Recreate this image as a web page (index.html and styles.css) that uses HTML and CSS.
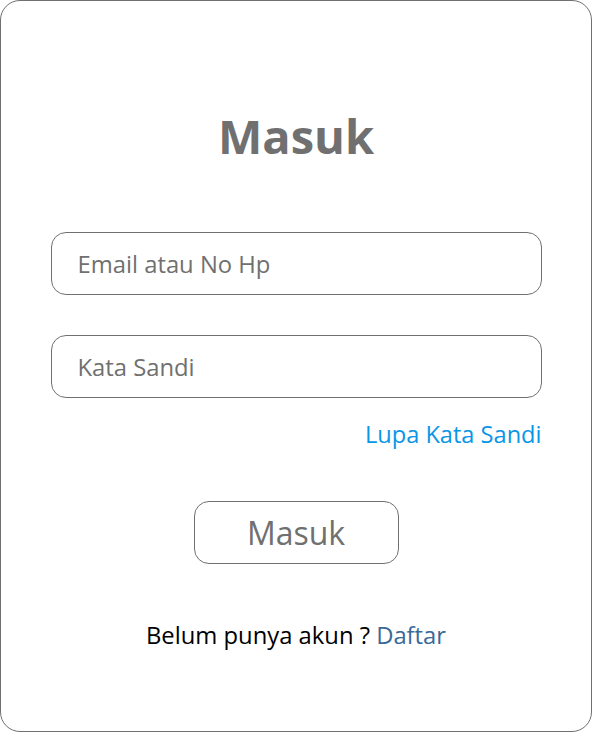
FILE: index.html
```html
<!DOCTYPE html>
<html lang="id">
<head>
<meta charset="utf-8">
<link rel="stylesheet" href="styles.css">
</head>
<body>
<div class="card">
  <h1 class="title">Masuk</h1>
  <form class="form">
    <input class="field" type="text" placeholder="Email atau No Hp">
    <input class="field field-second" type="password" placeholder="Kata Sandi">
    <a class="forgot" href="#">Lupa Kata Sandi</a>
    <button class="submit" type="button">Masuk</button>
  </form>
  <p class="signup">Belum punya akun ? <a class="signup-link" href="#">Daftar</a></p>
</div>
</body>
</html>
```
FILE: styles.css
```css
* { box-sizing: border-box; }
html, body { margin: 0; padding: 0; background: #fff; }
body {
  width: 592px;
  height: 732px;
  font-family: "Open Sans", "Noto Sans", sans-serif;
}
.card {
  width: 592px;
  height: 732px;
  border: 1px solid #707070;
  border-radius: 20px;
  display: flex;
  flex-direction: column;
  align-items: center;
  padding: 103px 50px 0 50px;
}
.title {
  margin: 0;
  font-size: 47px;
  line-height: 64px;
  font-weight: 700;
  color: #707070;
}
.form {
  width: 491px;
  display: flex;
  flex-direction: column;
  margin-top: 64px;
}
.field {
  width: 491px;
  height: 63px;
  border: 1px solid #707070;
  border-radius: 15px;
  padding: 0 26px;
  font-family: inherit;
  font-size: 23.8px;
  color: #707070;
  outline: none;
}
.field::placeholder { color: #707070; }
.field-second { margin-top: 40px; }
.forgot {
  align-self: flex-end;
  margin-top: 20px;
  font-size: 23.6px;
  line-height: 32px;
  color: #0a96e6;
  text-decoration: none;
}
.submit {
  align-self: center;
  margin-top: 51px;
  width: 205px;
  height: 63px;
  border: 1px solid #707070;
  border-radius: 15px;
  background: #fff;
  font-family: inherit;
  font-size: 32px;
  color: #707070;
  padding: 0;
}
.signup {
  margin: 55px 0 0 0;
  font-size: 23.8px;
  line-height: 32px;
  color: #000;
}
.signup-link {
  color: #3a6998;
  text-decoration: none;
}
```
